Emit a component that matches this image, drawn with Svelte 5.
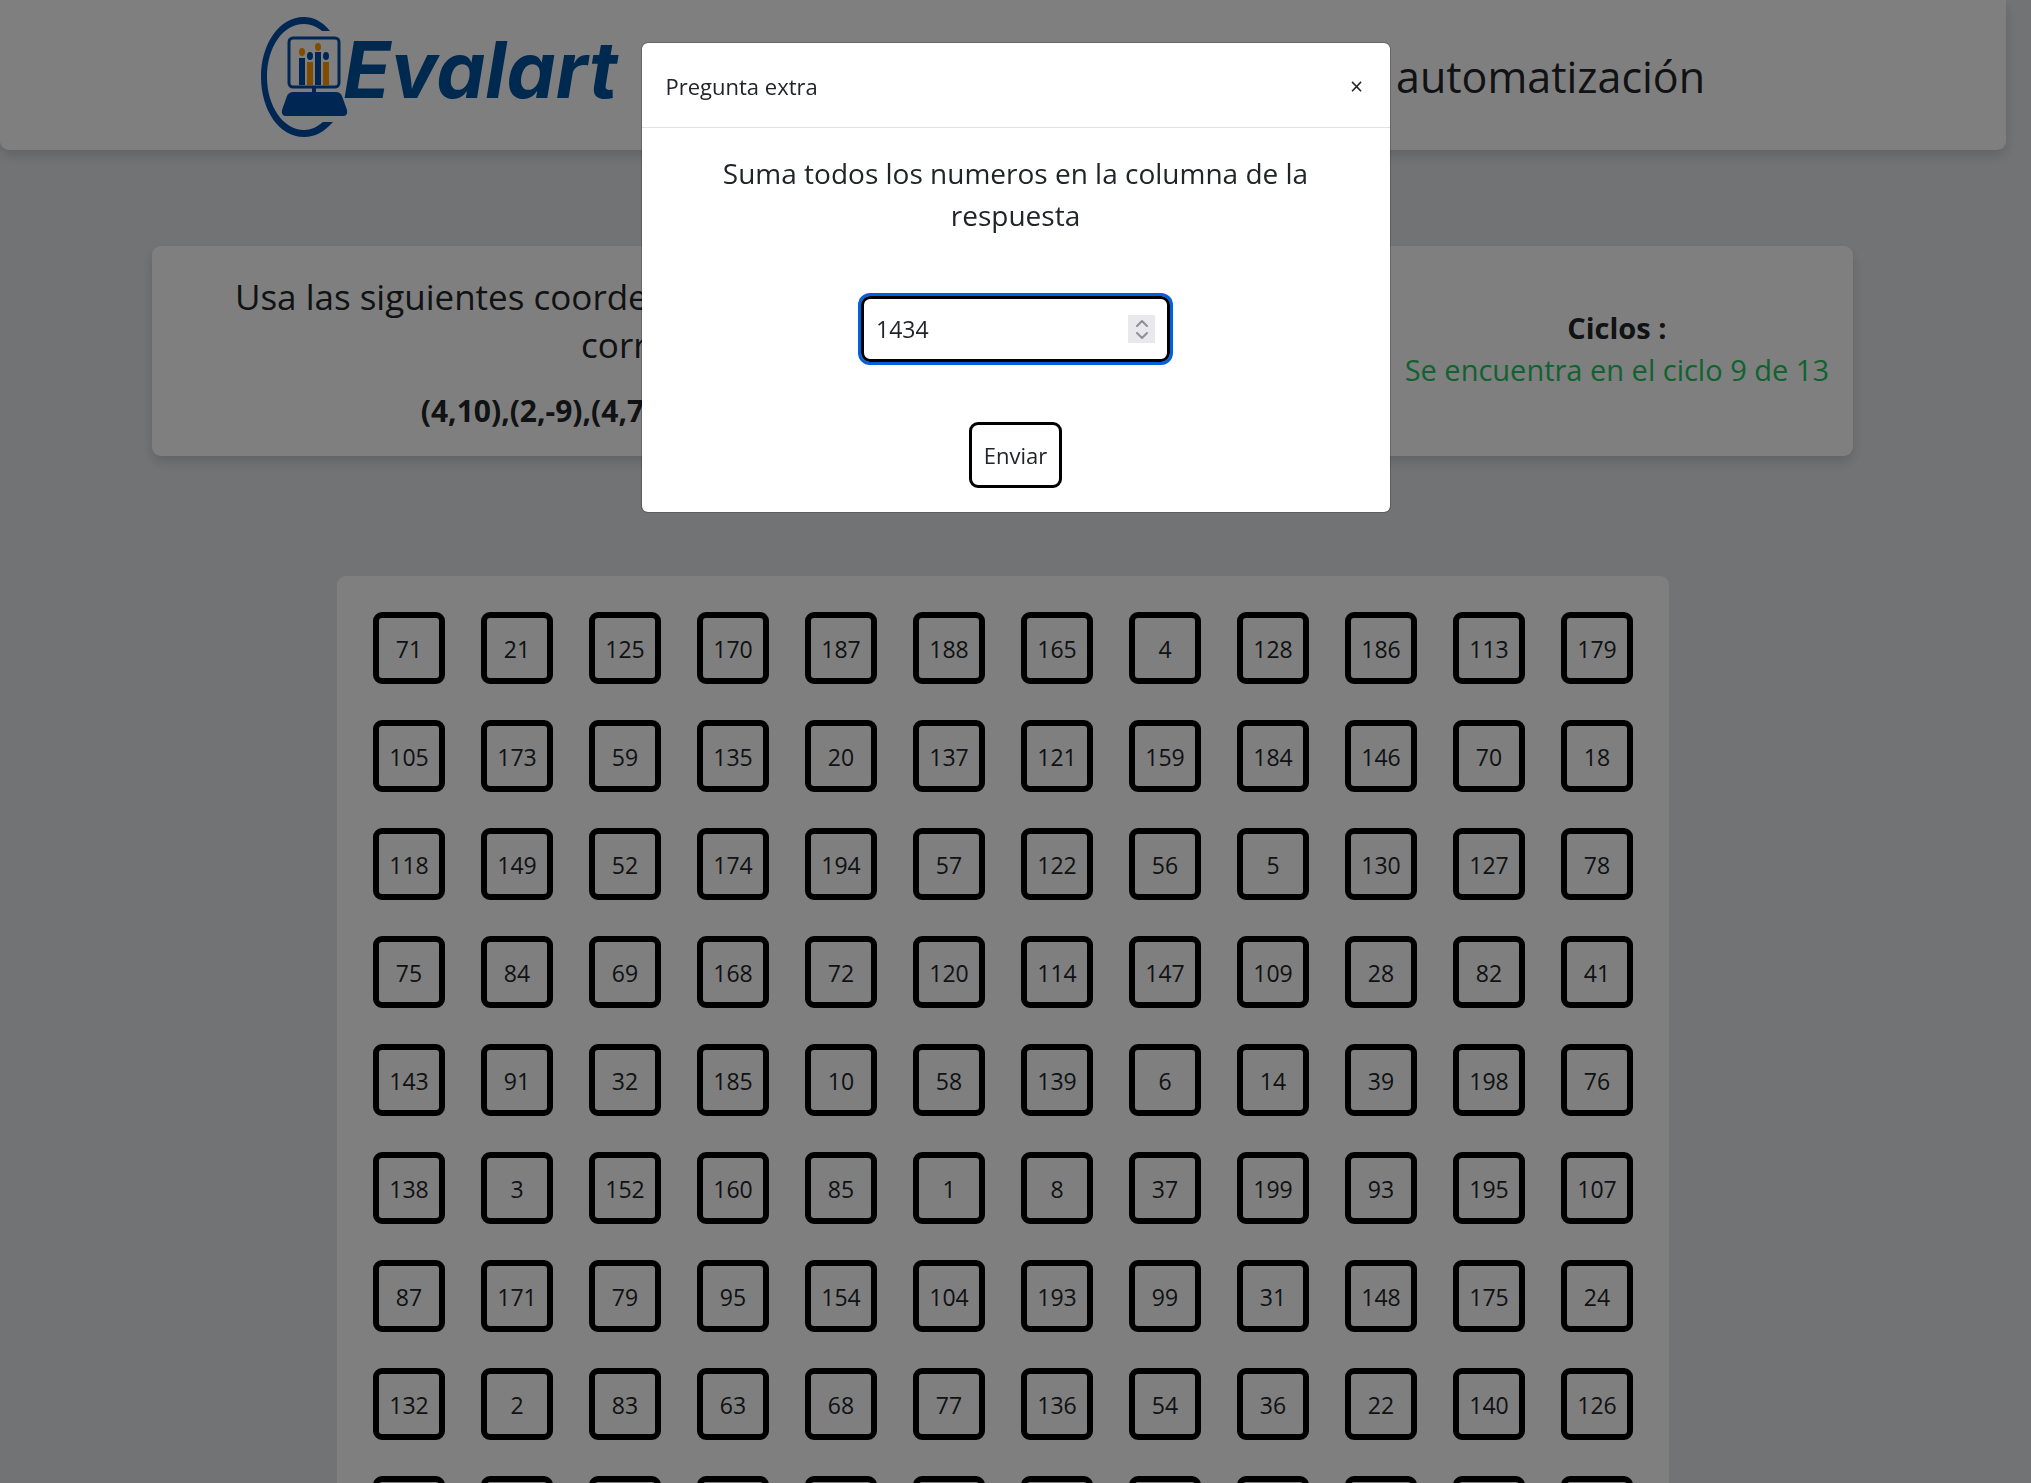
<script>
  const rows = [
    [71, 21, 125, 170, 187, 188, 165, 4, 128, 186, 113, 179],
    [105, 173, 59, 135, 20, 137, 121, 159, 184, 146, 70, 18],
    [118, 149, 52, 174, 194, 57, 122, 56, 5, 130, 127, 78],
    [75, 84, 69, 168, 72, 120, 114, 147, 109, 28, 82, 41],
    [143, 91, 32, 185, 10, 58, 139, 6, 14, 39, 198, 76],
    [138, 3, 152, 160, 85, 1, 8, 37, 199, 93, 195, 107],
    [87, 171, 79, 95, 154, 104, 193, 99, 31, 148, 175, 24],
    [132, 2, 83, 63, 68, 77, 136, 54, 36, 22, 140, 126],
    Array(12).fill(''),
  ];
  let answer = $state(1434);
</script>

<div class="page">
  <header class="topbar">
    <svg class="logo" viewBox="0 0 358 120" role="img" aria-label="Evalart">
      <rect x="28" y="21" width="50" height="49" rx="4" fill="none" stroke="#004ca8" stroke-width="3" />
      <g fill="#004ca8">
        <path d="M69 14C61 4 52 0 43 0C18 0 0 27 0 60S18 120 43 120C54 120 63 115 72 105L62 105C56 110 50 113 43 113C23 113 6 90 6 60S22 7 43 7C50 7 56 10 61 14Z" />
        <rect x="51" y="70" width="4" height="6" />
        <path d="M32 75H75Q79 75 81 79L86 93Q87 99 82 99H25Q20 99 21 93L26 79Q28 75 32 75Z" />
        <rect x="38" y="41" width="6" height="27" />
        <rect x="54" y="35" width="6" height="33" />
        <ellipse cx="49" cy="39" rx="3" ry="4" />
        <ellipse cx="65" cy="39" rx="3" ry="4" />
      </g>
      <g fill="#ff9900">
        <rect x="46" y="45" width="6" height="23" />
        <rect x="62" y="45" width="6" height="23" />
        <ellipse cx="41" cy="35" rx="3" ry="4" />
        <ellipse cx="57" cy="30" rx="3" ry="4" />
      </g>
      <text x="82" y="81" fill="#00529e">Evalart</text>
    </svg>
    <h1>automatización</h1>
  </header>

  <section class="card info">
    <div class="task">
      <p class="lead">Usa las siguientes coordenadas para encontrar y copiar la respuesta correcta en la cuadrícula :</p>
      <p class="coords">(4,10),(2,-9),(4,7),(-3,-5),(1,6),(-2,-8),(3,2),(-6,1),(5,-12)</p>
    </div>
    <div class="cycles">
      <p class="cycles-title">Ciclos :</p>
      <p class="cycles-state">Se encuentra en el ciclo 9 de 13</p>
    </div>
  </section>

  <main class="board">
    {#each rows as row}
      {#each row as n}
        <div class="cell">{n}</div>
      {/each}
    {/each}
  </main>
</div>

<div class="overlay">
  <div class="modal" role="dialog" aria-modal="true" aria-labelledby="modal-title">
    <div class="modal-head">
      <h2 id="modal-title">Pregunta extra</h2>
      <button class="close" type="button" aria-label="Cerrar">×</button>
    </div>
    <form class="modal-body" onsubmit={(e) => e.preventDefault()}>
      <label for="answer">Suma todos los numeros en la columna de la respuesta</label>
      <div class="field">
        <input id="answer" type="number" bind:value={answer} />
        <div class="spin">
          <button type="button" aria-label="Subir" onclick={() => answer++}>
            <svg viewBox="0 0 12 7"><path d="M1 6L6 1L11 6" /></svg>
          </button>
          <button type="button" aria-label="Bajar" onclick={() => answer--}>
            <svg viewBox="0 0 12 7"><path d="M1 1L6 6L11 1" /></svg>
          </button>
        </div>
      </div>
      <button class="send" type="submit">Enviar</button>
    </form>
  </div>
</div>

<style>
  :global(body) {
    margin: 0;
    background: #e5e7eb;
    color: #212529;
    font-family: "Open Sans", "Noto Sans", sans-serif;
    overflow: hidden;
  }
  * {
    box-sizing: border-box;
  }
  p, h1, h2 {
    margin: 0;
    font-weight: 400;
  }
  button, input {
    font: inherit;
    color: inherit;
    background: none;
    border: 0;
    padding: 0;
    margin: 0;
  }
  .page {
    height: 100vh;
    overflow: hidden;
    padding-right: 25px;
    display: flex;
    flex-direction: column;
  }
  .topbar {
    flex: none;
    display: flex;
    align-items: center;
    justify-content: space-between;
    height: 150px;
    padding: 4px 15% 0 13%;
    background: #fff;
    border-radius: 0 0 9px 9px;
    box-shadow: 0 6px 12px rgba(0, 0, 0, 0.14);
  }
  .logo {
    width: 358px;
    height: 120px;
    overflow: visible;
  }
  .logo text {
    font: italic 700 78px Inter, sans-serif;
  }
  h1 {
    font-size: 43px;
    line-height: 60px;
  }
  .card {
    background: #fff;
    border-radius: 9px;
    box-shadow: 0 6px 12px rgba(0, 0, 0, 0.14);
  }
  .info {
    flex: none;
    display: flex;
    align-items: center;
    margin: 96px 153px 0 152px;
    padding: 24px;
    min-height: 210px;
  }
  .task {
    flex: 1;
    padding-top: 3px;
    text-align: center;
  }
  .lead {
    font-size: 35px;
    line-height: 48px;
  }
  .coords {
    margin-top: 21px;
    font-size: 30px;
    line-height: 42px;
    font-weight: 700;
  }
  .cycles {
    flex: none;
    padding-bottom: 4px;
    text-align: center;
    font-size: 29px;
    line-height: 42px;
  }
  .cycles-title {
    font-weight: 700;
  }
  .cycles-state {
    color: #22c55e;
  }
  .board {
    flex: none;
    align-self: center;
    display: grid;
    grid-template-columns: repeat(12, 72px);
    gap: 36px;
    margin-top: 120px;
    padding: 36px;
    background: #fff;
    border-radius: 9px;
  }
  .cell {
    display: grid;
    place-items: center;
    height: 72px;
    padding-top: 2px;
    border: 6px solid #000;
    border-radius: 9px;
    font-size: 23px;
    line-height: 36px;
  }
  .overlay {
    position: fixed;
    inset: 0;
    display: flex;
    align-items: flex-start;
    justify-content: center;
    padding: 42px 24px;
    background: rgba(0, 0, 0, 0.5);
  }
  .modal {
    width: 750px;
    max-width: 100%;
    background: #fff;
    background-clip: padding-box;
    border: 1px solid rgba(0, 0, 0, 0.2);
    border-radius: 7px;
  }
  .modal-head {
    display: flex;
    align-items: center;
    justify-content: space-between;
    padding: 25px 24px 23px;
    border-bottom: 1px solid #dee2e6;
  }
  h2 {
    font-size: 22px;
    line-height: 36px;
  }
  .close {
    width: 18px;
    font-size: 23px;
    line-height: 36px;
    text-align: center;
  }
  .modal-body {
    display: flex;
    flex-direction: column;
    align-items: center;
    gap: 60px;
    padding: 24px;
  }
  label {
    font-size: 28px;
    line-height: 42px;
    max-width: 640px;
    text-align: center;
  }
  .field {
    display: flex;
    align-items: center;
    width: 309px;
    height: 66px;
    padding: 0 12px;
    border: 3px solid #000;
    border-radius: 9px;
    box-shadow: 0 0 0 3px #0060df;
  }
  input {
    flex: 1;
    min-width: 0;
    font-size: 23px;
    line-height: 36px;
    outline: none;
    appearance: textfield;
  }
  input::-webkit-inner-spin-button {
    appearance: none;
    margin: 0;
  }
  .spin {
    display: flex;
    flex-direction: column;
    justify-content: center;
    gap: 5px;
    width: 27px;
    height: 28px;
    background: #e9e9ed;
  }
  .spin button {
    display: flex;
    justify-content: center;
  }
  .spin svg {
    width: 12px;
    height: 7px;
    fill: none;
    stroke: #8f8f9d;
    stroke-width: 2;
    stroke-linecap: round;
    stroke-linejoin: round;
  }
  .send {
    height: 66px;
    padding: 0 12px;
    border: 3px solid #000;
    border-radius: 9px;
    font-size: 22px;
    line-height: 36px;
  }
</style>
